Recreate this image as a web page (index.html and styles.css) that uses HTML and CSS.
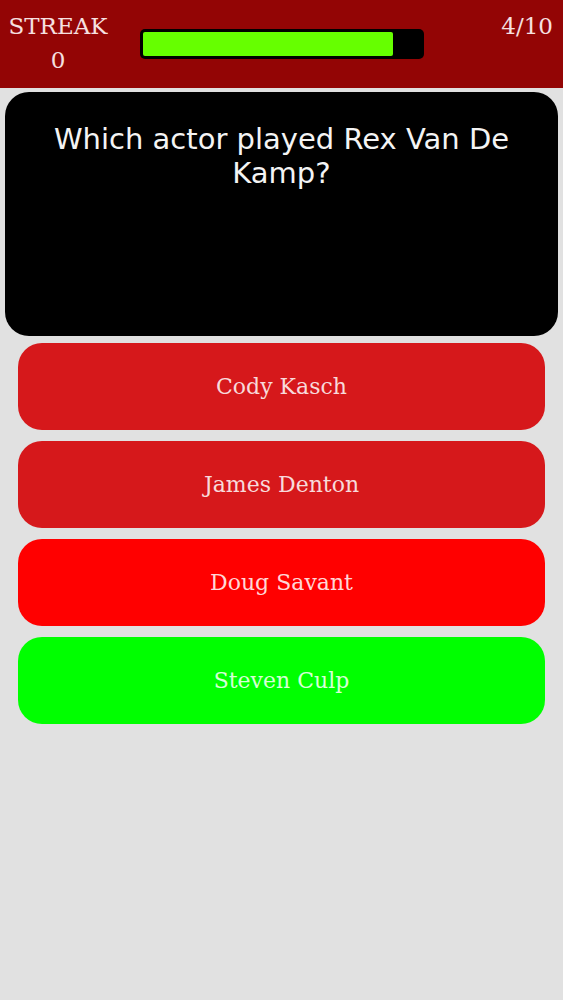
FILE: index.html
```html
<!DOCTYPE html>
<html>
<head>
<meta charset="utf-8">
<link rel="stylesheet" href="styles.css">
</head>
<body>
<header class="top">
  <div class="streak">
    <div>STREAK</div>
    <div>0</div>
  </div>
  <div class="bar"><div class="fill" style="width:90%"></div></div>
  <div class="count">4/10</div>
</header>
<main>
  <div class="question">Which actor played Rex Van De Kamp?</div>
  <div class="answers">
    <div class="ans wrong">Cody Kasch</div>
    <div class="ans wrong">James Denton</div>
    <div class="ans picked">Doug Savant</div>
    <div class="ans right">Steven Culp</div>
  </div>
</main>
</body>
</html>
```
FILE: styles.css
```css
* { box-sizing: border-box; }
html, body { margin: 0; padding: 0; }
body {
  width: 563px;
  height: 1000px;
  background: #e1e1e1;
  overflow: hidden;
}
.top {
  height: 88px;
  background: #930505;
  display: flex;
  align-items: flex-start;
  padding: 9px 10px 0 8px;
  font-family: "DejaVu Serif", serif;
  font-size: 23px;
  line-height: 34px;
  color: #f6e0e0;
}
.streak {
  width: 100px;
  text-align: center;
}
.bar {
  margin-left: 32px;
  margin-top: 20px;
  width: 284px;
  height: 30px;
  background: #000;
  border-radius: 5px;
  padding: 3px;
}
.fill {
  height: 100%;
  background: #66ff00;
  border-radius: 2px;
}
.count {
  margin-left: auto;
}
main {
  padding: 4px 5px 0 5px;
}
.question {
  height: 244px;
  background: #000;
  border-radius: 24px;
  color: #f4f4f4;
  font-family: "DejaVu Sans", sans-serif;
  font-size: 29px;
  line-height: 34px;
  text-align: center;
  padding: 30px 26px 0;
}
.answers {
  display: flex;
  flex-direction: column;
  gap: 11px;
  padding: 7px 13px 0;
}
.ans {
  height: 87px;
  border-radius: 24px;
  display: flex;
  align-items: center;
  justify-content: center;
  font-family: "DejaVu Serif", serif;
  font-size: 22px;
  color: rgba(255, 255, 255, 0.85);
}
.wrong { background: #d6181b; }
.picked { background: #ff0000; }
.right { background: #00ff00; }
```
